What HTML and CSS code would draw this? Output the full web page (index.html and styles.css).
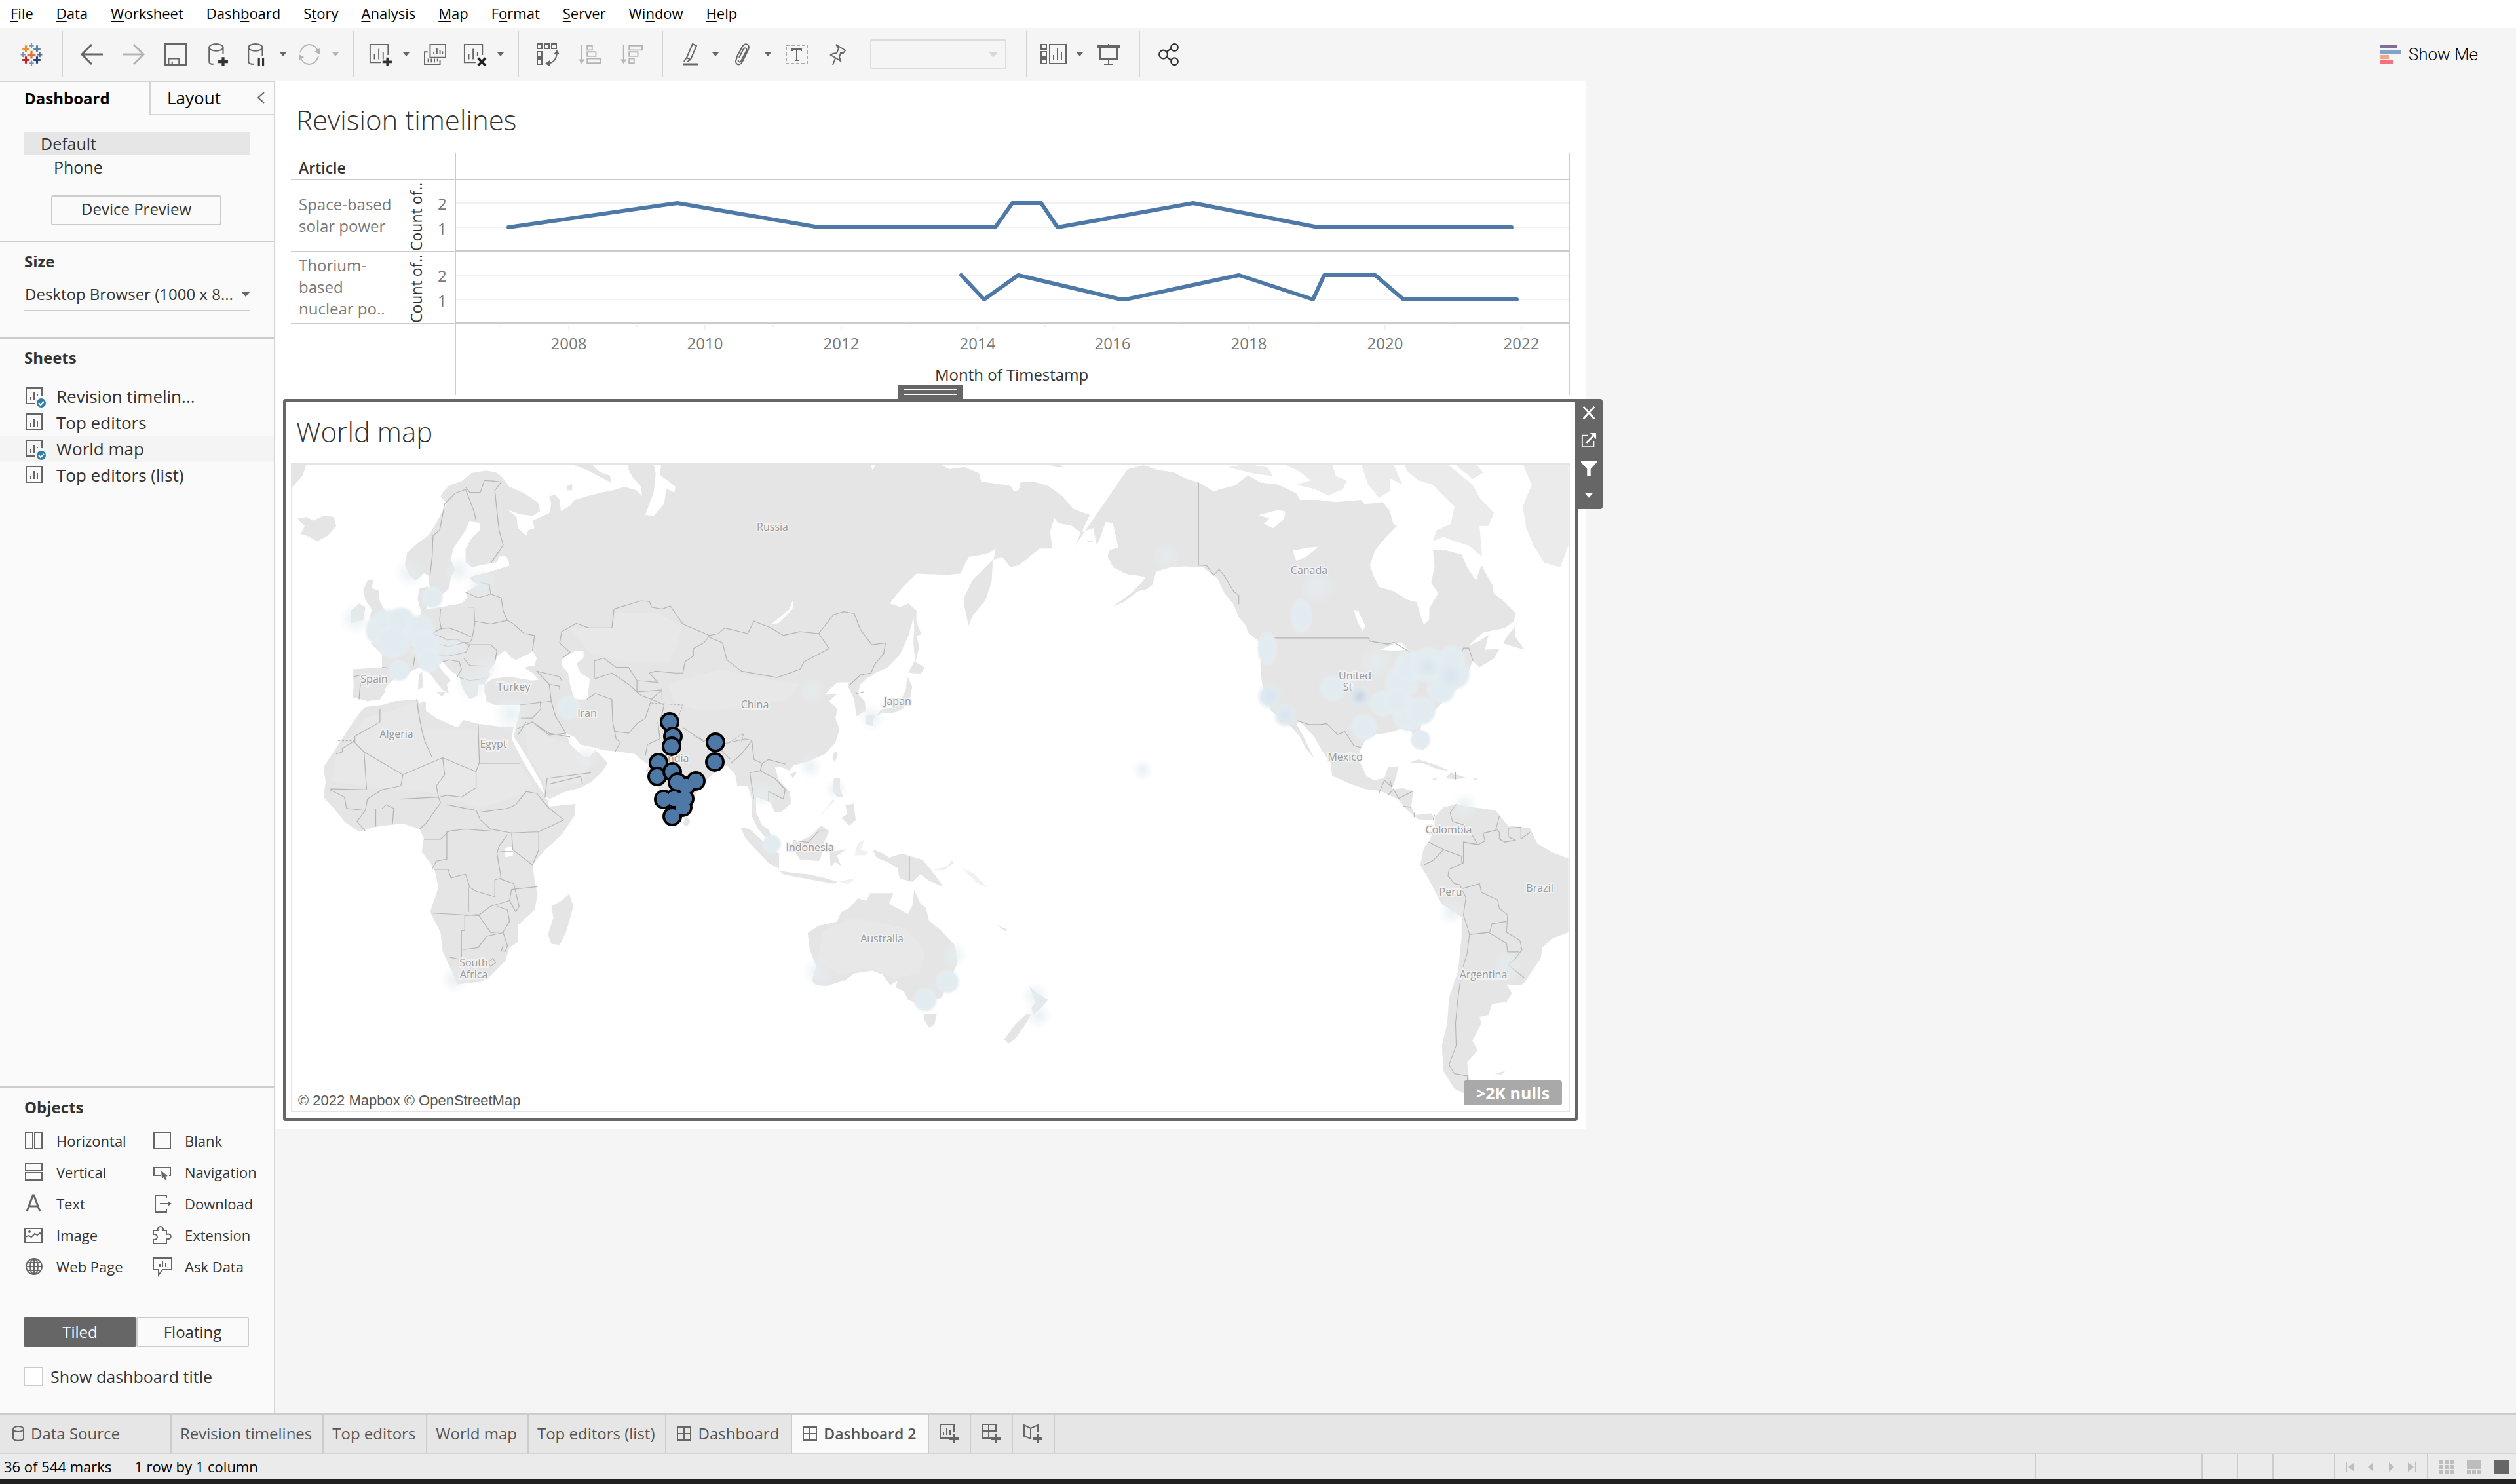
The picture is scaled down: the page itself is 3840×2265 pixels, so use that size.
FILE: index.html
```html
<!DOCTYPE html>
<html lang="en">
<head>
<meta charset="utf-8">
<title>Dashboard 2</title>
<link rel="stylesheet" href="styles.css">
</head>
<body>
<svg class="defs" aria-hidden="true">
  <defs>
    <symbol id="i-caret" viewBox="0 0 12 8"><path d="M1 1h10L6 7z" fill="currentColor"/></symbol>
    <symbol id="i-dash" viewBox="0 0 22 22"><path d="M1 1h20v20H1zM11 1v20M1 11h20"/></symbol>
    <symbol id="i-mini" viewBox="0 0 34 34"><path d="M3 4h24v24H3zM10 23v-5M15 23V11M20 23v-9"/></symbol>
    <symbol id="i-minicheck" viewBox="0 0 34 34"><path d="M16 28H3V4h24v12M10 23v-5M15 23V11M20 16v-2"/><circle cx="26" cy="27" r="7" fill="#337ea3" stroke="none"/><path d="M22 27l3 3 5-5" stroke="#fff" stroke-width="2"/></symbol>
    <radialGradient id="heat"><stop offset="0" stop-color="#e1ebf0"/><stop offset=".75" stop-color="#e3ecf0"/><stop offset="1" stop-color="#e8f0f4" stop-opacity="0"/></radialGradient>
    <radialGradient id="faint"><stop offset="0" stop-color="#e4ecf0" stop-opacity=".8"/><stop offset="1" stop-color="#e8f0f4" stop-opacity="0"/></radialGradient>
    <radialGradient id="hot"><stop offset="0" stop-color="#c9d1df"/><stop offset=".6" stop-color="#dce5ed"/><stop offset="1" stop-color="#e3ecf0" stop-opacity="0"/></radialGradient>
    <radialGradient id="warm"><stop offset="0" stop-color="#dae4ee"/><stop offset=".6" stop-color="#dfe9ef"/><stop offset="1" stop-color="#e3ecf0" stop-opacity="0"/></radialGradient>
  </defs>
</svg>

<nav class="menubar" aria-label="Main menu">
  <a href="#"><u>F</u>ile</a><a href="#"><u>D</u>ata</a><a href="#"><u>W</u>orksheet</a><a href="#">Dash<u>b</u>oard</a><a href="#">S<u>t</u>ory</a><a href="#"><u>A</u>nalysis</a><a href="#"><u>M</u>ap</a><a href="#">F<u>o</u>rmat</a><a href="#"><u>S</u>erver</a><a href="#">Wi<u>n</u>dow</a><a href="#"><u>H</u>elp</a>
</nav>

<div class="toolbar">
  <div class="group first">
    <button class="tool" aria-label="Start page"><svg viewBox="0 0 32 32" stroke-width="3">
      <path d="M16 11v11M10 16.500h12" stroke="#eb6f2d"/><path d="M8 3v10M3 8h10" stroke="#e8912d"/><path d="M24 3v10M19 8h10" stroke="#5b879b"/><path d="M8 19v10M3 24h10" stroke="#c8202f"/><path d="M24 19v10M19 24h10" stroke="#1f457e"/>
      <path d="M16 0v7M12.500 3.500h7M4 13v7M.5 16.500h7" stroke="#7199a6" stroke-width="2"/><path d="M28 13v7M24.500 16.500h7" stroke="#59658f" stroke-width="2"/><path d="M16 25v7M12.500 28.500h7" stroke="#7b8fb5" stroke-width="2"/></svg></button>
  </div>
  <div class="group">
    <button class="tool" aria-label="Undo"><svg viewBox="0 0 34 32" stroke-width="3"><path d="M2 16h32M17 1L2 16l15 15"/></svg></button>
    <button class="tool off" aria-label="Redo"><svg viewBox="0 0 34 32" stroke-width="3"><path d="M0 16h32M17 1l15 15-15 15"/></svg></button>
    <button class="tool" aria-label="Save"><svg viewBox="0 0 32 32"><path d="M1 1h30v30H1zM6 31V22h15v9M11 31v-5"/></svg></button>
    <button class="tool" aria-label="New data source"><svg viewBox="0 0 32 32"><ellipse cx="14" cy="6" rx="10" ry="5"/><path d="M4 6v20c0 3 3 4 6 4M24 6v10"/><path d="M24 20v13M17 26.500h14" stroke="#333" stroke-width="4"/></svg></button>
    <button class="tool split" aria-label="Pause updates"><svg viewBox="0 0 32 32"><ellipse cx="14" cy="6" rx="10" ry="5"/><path d="M4 6v20c0 3 3 4 8 4M24 6v12"/><path d="M19 21v12M25 21v12" stroke="#333" stroke-width="3"/></svg></button>
    <button class="caret" aria-label="Update options"><svg><use href="#i-caret"/></svg></button>
    <button class="tool split off" aria-label="Refresh"><svg viewBox="0 0 34 32"><path d="M3 13C6 5 11 1 17 1c7 0 12 5 14 12M31 19c-3 8-8 12-14 12-7 0-12-5-14-12"/><path d="M25 12l8 4V7zM9 20l-8-4v9z" fill="currentColor" stroke="none"/></svg></button>
    <button class="caret off" aria-label="Refresh options"><svg><use href="#i-caret"/></svg></button>
  </div>
  <div class="group">
    <button class="tool split" aria-label="New worksheet"><svg viewBox="0 0 36 36"><path d="M20 31H2V2h29v17M9 26v-8M16 26V9M23 26V14"/><path d="M30 23v14M22 30h15" stroke="#333" stroke-width="4"/></svg></button>
    <button class="caret" aria-label="New sheet options"><svg><use href="#i-caret"/></svg></button>
    <button class="tool" aria-label="Duplicate"><svg viewBox="0 0 36 34"><path d="M10 1h25v21H10zM16 17v-4M21 17V7M26 17v-7M30 17v-5M6 13H1v20h25V26M7 24v6M12 24v6M17 24v6M22 24v4"/></svg></button>
    <button class="tool split" aria-label="Clear sheet"><svg viewBox="0 0 36 36"><path d="M20 31H2V2h29v17M9 26v-8M16 26V9M23 20V14"/><path d="M24 24l12 12M36 24L24 36" stroke="#222" stroke-width="4"/></svg></button>
    <button class="caret" aria-label="Clear options"><svg><use href="#i-caret"/></svg></button>
  </div>
  <div class="group">
    <button class="tool" aria-label="Swap rows and columns"><svg viewBox="0 0 34 34"><path d="M1 1h7v7H1zM12 1h7v7h-7zM23 1h7v7h-7zM1 13h7v8H1zM1 24h7v8H1zM17 31c8-1 13-7 14-16"/><path d="M26 17l5-7 4 7zM20 26l-7 5 7 4z" fill="currentColor" stroke="none"/></svg></button>
    <button class="tool off" aria-label="Sort ascending"><svg viewBox="0 0 36 34"><path d="M5 2v25M14 3h8v7h-8zM14 13h14v7H14zM14 24h21v7H14z"/><path d="M0 25h10l-5 7z" fill="currentColor" stroke="none"/></svg></button>
    <button class="tool off" aria-label="Sort descending"><svg viewBox="0 0 36 34"><path d="M5 2v25M14 3h21v7H14zM14 13h14v7H14zM14 24h8v7h-8z"/><path d="M0 25h10l-5 7z" fill="currentColor" stroke="none"/></svg></button>
  </div>
  <div class="group">
    <button class="tool split" aria-label="Highlight"><svg viewBox="0 0 32 34"><path d="M21 1l6 3-9 21-6-3zM12 22l-3 4M18 25l-5 3M9 26l-1 2"/><path d="M6 32h23" stroke-width="3"/></svg></button>
    <button class="caret" aria-label="Highlight options"><svg><use href="#i-caret"/></svg></button>
    <button class="tool split" aria-label="Group members"><svg viewBox="0 0 32 34"><path d="M12 22l6-12c3-5 7-2 5 2l-8 15c-2 3-5 1-4-2M9 20L17 5c4-7 13-3 9 5L17 28c-4 8-13 4-9-4z"/></svg></button>
    <button class="caret" aria-label="Group options"><svg><use href="#i-caret"/></svg></button>
    <button class="tool" aria-label="Show mark labels"><svg viewBox="0 0 34 32"><path d="M1 2h32v28H1z" stroke="#aaa" stroke-dasharray="5 3"/><path d="M10 11V8h14v3M17 8v17M14 25h6"/></svg></button>
    <button class="tool" aria-label="Fix axes"><svg viewBox="0 0 34 34"><path d="M13 2l14 9-3 4-4 0-2 6 2 6L5 18l3-2 6-1 3-7zM12 23L8 33"/></svg></button>
    <select class="fit" aria-label="Fit" disabled><option></option></select>
  </div>
  <div class="group">
    <button class="tool split" aria-label="Show or hide cards"><svg class="cards" viewBox="0 0 40 34"><path d="M1 2h8v7H1zM1 13h8v8H1zM1 24h8v7H1zM14 2h25v29H14zM20 26v-8M26 26V8M32 26V13"/></svg></button>
    <button class="caret" aria-label="Card options"><svg><use href="#i-caret"/></svg></button>
    <button class="tool" aria-label="Presentation mode"><svg viewBox="0 0 34 32"><path d="M4 6v17h26V6M17 23v8M10 31h14M17 0v3"/><path d="M0 4h34" stroke-width="4"/></svg></button>
  </div>
  <div class="group last">
    <button class="tool" aria-label="Share"><svg class="share" viewBox="0 0 32 32"><circle cx="8" cy="16" r="6"/><circle cx="24" cy="6" r="5"/><circle cx="24" cy="26" r="5"/><path d="M13 12l6-4M13 20l6 4"/></svg></button>
  </div>
  <button class="showme"><svg viewBox="0 0 32 30"><path fill="#846c95" d="M0 0h25v6H0z"/><path fill="#81a3cb" d="M0 8h32v6H0z"/><path fill="#f4a680" d="M0 16h13v6H0z"/><path fill="#f96f80" d="M0 24h19v6H0z"/></svg>Show Me</button>
</div>

<div class="workspace">
  <aside class="side">
    <div class="sidetabs">
      <button class="sidetab on">Dashboard</button>
      <button class="sidetab">Layout<svg viewBox="0 0 12 18"><path d="M11 1L2 9l9 8"/></svg></button>
    </div>
    <section class="devices">
      <ul><li class="on">Default</li><li>Phone</li></ul>
      <button class="preview">Device Preview</button>
    </section>
    <section class="size">
      <h2><label for="size">Size</label></h2>
      <div class="sizebox"><select id="size"><option>Desktop Browser (1000 x 8...</option></select><svg viewBox="0 0 14 9"><path d="M0 0h14L7 8z" fill="currentColor" stroke="none"/></svg></div>
    </section>
    <section class="sheets">
      <h2>Sheets</h2>
      <ul>
        <li><svg><use href="#i-minicheck"/></svg>Revision timelin...</li>
        <li><svg><use href="#i-mini"/></svg>Top editors</li>
        <li class="on"><svg><use href="#i-minicheck"/></svg>World map</li>
        <li><svg><use href="#i-mini"/></svg>Top editors (list)</li>
      </ul>
    </section>
    <section class="objects">
      <h2>Objects</h2>
      <ul>
        <li><svg viewBox="0 0 30 30"><path d="M3 2h11v25H3zM17 2h11v25H17z"/></svg>Horizontal</li>
        <li><svg viewBox="0 0 30 30"><path d="M3 2h25v25H3z"/></svg>Blank</li>
        <li><svg viewBox="0 0 30 30"><path d="M3 2h25v11H3zM3 16h25v11H3z"/></svg>Vertical</li>
        <li><svg viewBox="0 0 30 30"><path d="M13 20H3V8h25v12h-2"/><path d="M14 13l10 8-4 1 3 4-3 1-2-4-3 2z" fill="currentColor" stroke="none"/></svg>Navigation</li>
        <li><svg viewBox="0 0 30 30" stroke-width="3"><path d="M5 27L14 3h2l9 24M8 19h14"/></svg>Text</li>
        <li><svg viewBox="0 0 30 30"><path d="M22 7V3H5v25h17v-4M12 15h14"/><path d="M24 11l6 4-6 4z" fill="currentColor" stroke="none"/></svg>Download</li>
        <li><svg viewBox="0 0 30 30"><path d="M2 5h26v21H2zM2 18l6-2 4 2 5-5 4 2 4-3 3 4"/><circle cx="9" cy="10" r="2" fill="currentColor" stroke="none"/></svg>Image</li>
        <li><svg viewBox="0 0 30 30"><path d="M2 8h7c-2-7 9-9 8 0h5v6c9-3 9 9 0 7v7H2v-6c8 1 8-9 0-8z"/></svg>Extension</li>
        <li><svg viewBox="0 0 30 30"><circle cx="16" cy="15" r="12"/><ellipse cx="16" cy="15" rx="6" ry="12"/><path d="M16 3v24M4 15h24M6 9h20M6 21h20"/></svg>Web Page</li>
        <li><svg viewBox="0 0 30 30"><path d="M2 2h28v18H16l-6 8v-8H2zM12 16v-5M16 16V6M21 16V9"/></svg>Ask Data</li>
      </ul>
      <div class="mode"><button class="on">Tiled</button><button>Floating</button></div>
      <label class="check"><input type="checkbox">Show dashboard title</label>
    </section>
  </aside>

  <main class="canvas">
    <div class="dashboard">
      <section class="timeline">
        <h1>Revision timelines</h1>
        <div class="chart">
          <div class="heads">
            <div class="head">Article</div>
            <div class="row"><span class="name">Space-based solar power</span><span class="axis">Count of..</span><span class="ticks"><i>2</i><i>1</i></span></div>
            <div class="row"><span class="name">Thorium-based nuclear po..</span><span class="axis">Count of..</span><span class="ticks"><i>2</i><i>1</i></span></div>
          </div>
          <svg class="plot" viewBox="696 233 1700 370" role="img" aria-label="Count of revisions by month">
            <g stroke="#f1f1f1" stroke-width="2"><path d="M686 310H2394M686 347H2394M686 420H2394M686 457H2394"/>
              <path d="M868 496v8M1076 496v8M1284 496v8M1492 496v8M1699 496v8M1906 496v8M2114 496v8M2322 496v8M764 496v3M972 496v3M1180 496v3M1388 496v3M1595 496v3M1803 496v3M2011 496v3M2218 496v3"/></g>
            <path d="M694 274H2394M2395 233V603" stroke="#ccc" stroke-width="2"/>
            <path d="M694 383H2394M694 493H2394" stroke="#ccc" stroke-width="2"/>
            <g stroke="#4e79a7" stroke-width="6" stroke-linecap="round" stroke-linejoin="round">
              <path d="M776 347L1034 310 1250 347H1519L1545 310H1589L1614 347 1821 310 2012 347H2307"/>
              <path d="M1467 420L1502 457 1554 420 1711 457H1718L1891 420 2004 457 2021 420H2099L2142 457H2315"/>
            </g>
            <g class="years"><text x="868" y="533">2008</text><text x="1076" y="533">2010</text><text x="1284" y="533">2012</text><text x="1492" y="533">2014</text><text x="1698" y="533">2016</text><text x="1906" y="533">2018</text><text x="2114" y="533">2020</text><text x="2322" y="533">2022</text></g>
            <text class="axistitle" x="1544" y="581">Month of Timestamp</text>
          </svg>
        </div>
      </section>
      <section class="worldmap">
        <button class="grip" aria-label="Move"></button>
        <div class="sidebuttons">
          <button aria-label="Remove"><svg viewBox="0 0 26 26" stroke-width="3"><path d="M4 3l18 20M22 3L4 23"/></svg></button>
          <button aria-label="Go to sheet"><svg viewBox="0 0 26 26"><path d="M12 5H2v19h19V14" stroke-width="2"/><path d="M9 17L21 5" stroke-width="3"/><path d="M15 1h10v10z" fill="#fff" stroke="none"/></svg></button>
          <button aria-label="Use as filter"><svg viewBox="0 0 26 26"><path d="M0 1h26v3L16 15v11h-6V15L0 4z" fill="#fff" stroke="none"/></svg></button>
          <button aria-label="More options"><svg viewBox="0 0 26 26"><path d="M6 9h14l-7 8z" fill="#fff" stroke="none"/></svg></button>
        </div>
        <h1>World map</h1>
        <div class="mapbox">
          <svg class="map" viewBox="444 707 1952 990" role="img" aria-label="World map of editors">
            <g class="land" transform="translate(430 700) scale(.6378 .5741)">
              <path d="M22 13H60L50 45 22 80zM38 160l22-5 15 10 25-13 25 3 5 25-20 25-25 15-25-15-15-5 10-20z"/>
              <path d="M385 90L400 72 430 60 455 38 490 32 515 38 528 50 545 75 580 92 615 118 618 140 600 152 570 148 540 135 562 155 565 185 585 205 590 190 605 185 600 165 640 145 645 120 640 100 655 95 665 110 668 140 690 125 700 110 730 100 765 90 790 85 820 75 850 85 862 100 860 75 840 50 830 30 830 13H890L895 40 890 90 870 150 890 152 915 120 920 80 940 90 942 75 920 55 905 45 908 13H1405L1415 32 1422 13H1568V303L1520 303 1505 315 1470 360 1455 385 1480 395 1500 385 1520 405 1510 430 1500 470 1480 520 1450 555 1420 570 1400 585 1385 600 1378 625 1395 645 1398 670 1375 685 1370 640 1355 605 1358 595 1330 595 1310 615 1300 628 1330 625 1310 645 1330 665 1325 690 1335 720 1325 755 1300 785 1260 805 1225 815 1215 830 1195 820 1180 820 1190 855 1215 885 1220 915 1195 940 1180 940 1170 915 1150 905 1135 900 1135 940 1150 975 1165 985 1178 1022 1160 1010 1140 985 1125 950 1125 905 1115 870 1090 870 1085 840 1065 815 1050 825 1030 840 1000 870 985 905 975 945 955 960 930 960 925 940 905 880 890 850 870 830 880 815 860 800 845 785 800 778 770 775 755 770 735 765 715 760 700 740 680 730 690 760 705 780 715 790 735 795 750 775 760 785 780 810 765 835 740 860 715 875 680 885 640 905 630 895 620 860 590 800 565 755 555 740 560 715 567 680 572 655 545 655 510 655 490 645 485 620 485 600 505 585 545 580 600 590 615 588 600 570 580 555 605 550 610 530 600 512 590 520 560 535 550 530 535 510 515 525 510 545 495 565 500 575 490 590 485 600 470 600 468 630 450 640 440 625 430 600 425 580 400 560 385 540 375 550 385 565 405 590 395 600 400 625 385 615 370 595 350 565 330 555 310 565 300 575 280 580 265 590 250 605 245 625 235 640 205 645 190 640 170 635 172 600 170 560 240 555 240 520 212 490 240 485 260 470 290 450 300 440 320 430 335 410 330 395 325 370 330 345 350 340 355 370 350 390 345 400 380 395 430 385 445 370 440 355 455 345 470 335 455 325 450 315 465 310 500 300 545 285 540 265 520 260 515 275 470 285 455 290 440 275 440 240 455 210 475 190 475 172 450 165 440 190 425 215 410 240 405 270 415 295 405 315 400 345 385 360 375 370 355 350 350 310 340 305 320 325 305 310 295 280 300 250 325 225 350 205 360 190 380 150 395 120 380 100z"/>
              <path d="M200 660L240 655 270 645 325 640 330 650 345 645 345 670 370 690 420 715 435 695 470 705 520 712 555 712 550 745 575 800 605 855 635 905 640 925 703 918 700 950 670 1000 630 1040 600 1080 605 1120 612 1160 605 1200 565 1240 565 1285 545 1300 535 1335 500 1375 480 1390 420 1398 410 1370 385 1310 380 1260 355 1205 375 1140 365 1090 335 1045 340 1010 330 985 290 970 250 975 220 980 185 992 150 965 125 930 100 900 105 860 100 820 130 770 165 710 190 670zM688 1157L698 1190 680 1260 665 1293 645 1290 637 1265 650 1220 645 1190 670 1175z"/>
              <path d="M205 325L220 320 215 345 232 350 235 380 245 400 262 440 255 460 225 465 205 460 225 440 210 430 215 400 200 375 195 350zM165 405L185 385 200 395 195 430 165 438zM328 572l8-4 2 40-12 5zM370 620l22 0-8 14zM690 13L740 13 760 35 785 45 790 65 755 45 730 30zM683 72l12-4v16h-12zM968 950l10 15-8 12-10-5z"/>
              <path d="M1098 980L1120 985 1155 1020 1190 1050 1190 1090 1165 1075 1135 1040 1110 1010zM1190 1095L1215 1100 1260 1105 1300 1115 1330 1125 1320 1130 1270 1120 1200 1105zM1222 1015L1235 1020 1270 1000 1290 975 1310 990 1298 1020 1290 1060 1285 1070 1240 1065 1225 1040z"/>
              <path class="high" d="M200 690L320 650 335 720 470 720 475 810 570 812 600 870 560 900 470 930 380 890 280 880 120 860 130 790zM580 700L640 740 690 760 740 810 720 860 640 880 590 790zM925 600L1050 560 1180 590 1240 600 1210 640 1120 660 1000 670 940 650zM690 450L790 450 800 410 900 410 960 450 930 540 830 540 740 520z"/>
            </g>
            <g class="land" transform="translate(1000 700) scale(.6378)">
              <path d="M300 13H515L520 27 530 13H680L705 25 740 20 775 35 780 55 850 65 858 78 870 75 875 55 905 55 940 65 975 90 1000 120 1040 135 1030 155 1020 178 995 160 965 155 955 142 945 175 950 215 920 215 870 255 850 260 830 235 808 242 805 295 790 340 760 375 750 400 740 355 740 330 760 290 785 265 810 240 815 215 800 225 780 230 750 235 730 275 700 278 625 275 590 310 560 348H300z"/>
              <path d="M940 18l30-5 5 8zM1030 195l20 2-10 4zM615 355L625 365 625 390 637 420 625 425 632 450 622 490 618 440 620 400zM620 485L645 500 635 515 605 512 615 495zM603 520L615 545 610 575 590 600 565 610 545 608 530 615 540 600 575 595 590 575 600 550zM505 615L525 615 520 640 505 635zM430 700l7 5-7 23-6-13zM322 755l18-7-10 17z"/>
              <path d="M428 765L442 765 442 790 450 810 435 810 425 795zM455 830L475 825 480 865 465 878 445 860 460 850zM418 935L430 940 458 935 435 950 445 975 430 965 420 978 418 955z"/>
              <path d="M520 935L545 945 560 955 590 945 640 960 665 990 690 1025 655 1010 635 995 615 1013 585 1005 580 980 555 965 530 955z"/>
              <path class="pale" d="M665 985L700 975 710 960 715 968 690 985zM735 980l30 15 30 32-25-12zM485 920l15-8-8 25 20 4-10 8-25 0zM425 815l5 3-35 37zM440 1012l40-8-18 14z"/>
              <path d="M365 1135L390 1118 435 1108 445 1085 465 1075 485 1052 505 1058 515 1040 570 1040 560 1065 605 1090 615 1070 620 1032 635 1065 648 1075 655 1105 685 1130 718 1165 722 1210 700 1260 685 1290 655 1300 640 1310 605 1295 595 1275 575 1265 580 1250 562 1260 545 1235 520 1225 475 1232 455 1248 410 1262 385 1260 375 1250 385 1215 370 1175zM642 1328L674 1328 668 1355 655 1362 645 1345zM895 1262L915 1280 940 1295 920 1318 905 1330 900 1315 910 1300zM890 1328L900 1330 885 1355 860 1390 845 1400 835 1390 860 1355zM815 1115l30 13-8 2z"/>
              <path class="high" d="M400 1130L470 1100 540 1110 600 1125 645 1180 635 1230 570 1245 520 1220 440 1235 390 1200z"/>
            </g>
            <g class="land" transform="translate(1600 700) scale(.5485 .6633)">
              <path d="M220 25L265 15 300 25 350 32 380 45 418 55 460 75 490 68 520 62 555 38 590 55 640 60 690 80 700 95 750 95 800 100 870 95 880 105 930 100 950 120 960 150 970 155 940 180 910 210 895 245 905 270 920 295 960 305 1000 325 1025 330 1035 360 1045 382 1060 370 1060 345 1085 310 1065 285 1075 250 1070 210 1100 210 1150 220 1165 250 1190 280 1205 245 1235 290 1240 310 1270 330 1300 355 1295 375 1270 390 1210 400 1170 430 1200 420 1225 405 1215 440 1255 438 1240 460 1200 480 1180 465 1170 490 1150 520 1110 550 1080 575 1060 590 1040 605 1035 625 1055 660 1040 672 1020 650 1010 628 980 622 950 630 910 635 880 650 868 670 865 695 885 730 905 740 935 735 945 710 975 708 965 740 955 762 985 758 1015 765 1010 800 1020 820 1045 818 1065 816 1075 828 1060 832 1030 830 1000 810 975 785 925 765 880 760 840 748 790 730 785 700 760 670 740 640 700 605 690 610 710 640 725 665 740 690 715 665 700 640 680 620 650 600 620 580 595 520 590 480 592 425 555 400 550 385 530 365 515 335 490 310 470 275 430 250 380 248 340 250 300 260 290 290 275 300 250 305 210 330 180 340 230 310 260 285 270 272 215 265 180 250 165 225 170 210 195 205 180 150 160 145 145 180 135 200 125 160 90 170 75 200 70 205 45z"/>
              <path class="mid" d="M655 12H790L800 40 830 50 820 70 780 85 740 70 690 60 730 50 700 30zM990 12H1110L1180 60 1200 90 1240 125 1225 155 1200 155 1207 225 1170 200 1130 190 1100 180 1070 190 1080 165 1120 150 1130 110 1100 85 1070 60 1030 50 1000 30zM870 12H960L985 60 950 45 950 75 920 90 890 60zM500 20l50-8 60 8 15 20-50-5zM1130 12h60l20 20-30 15zM1320 12H1447V200L1425 250 1380 240 1350 200 1330 160 1320 110 1345 60z"/>
              <path d="M1005 700L1030 692 1080 705 1115 718 1085 715 1040 700zM1105 735L1120 722 1165 735 1130 738zM1183 736h10v3h-10zM1300 385L1300 410 1325 440 1265 425 1280 405zM1070 735l15 3-15 1zM1242 1415l30-6-12 8z"/>
              <path d="M1075 825L1100 802 1135 795 1160 800 1210 805 1245 810 1280 845 1340 850 1360 885 1400 905 1447 920V1090L1400 1105 1375 1125 1370 1150 1325 1205 1315 1212 1275 1210 1290 1230 1275 1250 1235 1255 1225 1280 1200 1285 1205 1300 1180 1340 1195 1360 1165 1390 1170 1425 1200 1470 1170 1465 1130 1450 1100 1410 1095 1350 1110 1300 1115 1240 1140 1180 1150 1100 1150 1055 1095 1025 1060 970 1035 935 1045 895 1060 880 1075 850z"/>
              <path class="water" d="M585 130L640 118 660 122 655 140 625 160 600 150 615 138zM680 212L720 205 750 203 720 225 690 235zM850 348L862 350 882 385 875 397 860 375zM925 440L965 425 985 425 1000 440 960 442zM1080 95l25-5 0 20-20-2z"/>
            </g>
            <g class="water" transform="translate(430 700) scale(.6378 .5741)">
              <path d="M672 530L700 512 722 512 722 530 705 545 715 570 737 585 732 640 700 640 690 600 685 570 670 550zM1225 370L1222 400 1190 437 1172 440 1215 400zM520 262l15-4 10 20-10 12zM535 1035l18-5 0 25-18 5z"/>
            </g>
            <g class="borders" transform="translate(430 700) scale(.6378 .5741)">
              <path d="M355 310L360 260 362 205 378 190 390 120 415 92 440 82 460 140 465 165M440 75L450 90 475 90 485 58 510 60 525 62 510 85 515 140 520 190 530 230 500 278M380 400L378 430 382 455M445 395L460 395 462 440 455 480M440 355L470 370 500 360 497 335 470 328M500 360L525 370 530 405 540 430 500 440 460 432M540 430L555 440 580 465 605 470 600 510M455 480L450 490 430 488 420 480 395 482 385 475 360 465 380 452 400 450 425 460 455 475M365 490L400 500 435 490 450 495 440 515 400 525 375 525M450 495L500 495 515 510 510 540M435 530L450 550 490 552M385 540L400 535 425 540 430 560 420 580 450 590 485 585M172 580L190 575 185 640M240 555L280 560M315 550L320 515 310 500M570 655L645 645 640 600 610 565 665 580 670 590M640 600L665 605 665 615M572 690L600 690 620 665 618 645M560 720L600 700 640 735 680 730M645 645L655 685 680 730M565 735L585 700M600 700L640 730 690 740M748 585V538L770 530 800 555 830 555 850 590 900 595 880 570 895 565 940 570 960 570 965 540 985 525 985 505 1010 490 1023 472M672 530L690 515 665 490 670 460 705 438 735 450 790 450 795 400 860 378 880 380 885 395 910 400 930 392 960 440 1023 470 1045 465 1060 450 1115 465 1130 432 1170 450 1200 470 1240 460 1285 465 1310 505 1250 540 1240 560 1185 582 1100 565 1065 535 1055 490 1023 475M1285 465L1320 415 1345 407 1370 412 1385 455 1412 495 1445 490 1440 520 1420 545 1410 570 1385 575 1358 603M1375 625L1392 620M730 640L750 625 790 640 792 700 800 745 810 755 798 778M795 725L830 730 850 705 870 690 885 640 860 630 830 600 790 570 750 585M850 590L850 620 910 615 885 640 915 655 905 700M910 610L910 640M870 790L875 760 905 745 900 700M960 715L1000 745 1045 760 1070 755 1110 745 1125 750 1100 785 1075 810M1048 765L1055 780 1075 800M1000 740L1005 750 1045 765M1125 750L1130 800 1150 810 1145 830 1120 835 1125 870 1130 905M1150 810L1165 800 1205 812M1145 830L1180 850 1205 880 1200 905 1165 885 1165 910M1225 1015L1260 1020 1285 990 1300 990M1502 1058V1123M470 710L473 810H570M472 810L465 832 385 795 290 840 197 780 203 880 115 878M197 780L175 755V738L235 700V665M175 750L145 770 145 780 130 785M323 640L328 680 335 720 342 750 360 795M465 832L465 875 430 900 395 895 375 900 370 870 390 840 385 795M290 840L285 870 240 880 205 905 200 935 155 930 150 900 115 880M285 905L375 900 380 915 345 970 330 985M265 970L268 930 250 920 240 930M225 978L225 930M200 990L180 965 200 935M395 920L440 930 465 935 475 960 500 985 550 995 615 992 675 960 640 930 610 890 585 885 560 920 540 930 475 940M615 992L615 1040 600 1080M550 995L553 1040 600 1080M523 1045H553M340 1012H380L400 990 440 985 500 990M360 1090L370 1070 395 1065 395 990M365 1092H398L405 1115 420 1110 440 1105 450 1140 465 1150 510 1165 510 1120 525 1115 515 1050 520 1030 540 1000M447 1140V1205M355 1208L470 1215 500 1190 545 1175 550 1145 612 1138M545 1175L560 1205 568 1190 555 1130 525 1118M430 1330V1255H438V1215L470 1212 500 1260 530 1258 545 1230 540 1200 515 1190M435 1305L470 1300 490 1270 530 1260 540 1295 535 1310 525 1308 530 1295M493 1340L505 1328 512 1340 500 1350zM400 1325L430 1332M630 900L635 850 740 835M640 865L715 845 720 865"/>
              <path d="M135 750H175M885 650L960 655 950 685 905 675M1070 755L1105 730 1100 755" stroke-dasharray="5 4"/>
            </g>
            <g class="borders" transform="translate(1600 700) scale(.5485 .6633)">
              <path d="M418 55V245L440 246 460 268 475 255 490 270 515 305 530 315 530 335M628 413H890L895 420 945 427 962 423 1000 442 1022 460M1145 460L1155 436 1170 436 1182 466M692 603L725 612H755L775 610 805 635 825 628 850 660 870 665M920 770L935 740 955 755 950 735M945 775L960 760 975 782 1015 765M988 800L1010 802M1018 815V825M1075 820L1070 832M1133 722V738M1135 795L1118 815 1125 835 1165 845 1175 860 1195 888 1215 880 1210 862 1245 855 1255 822M1245 850L1255 860 1255 875 1270 882 1300 878 1280 870 1280 850 1315 848 1315 875 1340 860M1195 888L1155 882 1155 930 1115 945 1112 960 1130 978 1145 980 1150 990 1200 978 1205 998 1250 1015 1255 1035 1278 1050 1275 1090 1312 1108 1318 1130 1300 1150 1280 1165 1325 1195M1058 882L1100 900 1150 915 1150 930M1100 900L1070 925 1045 935M1150 990L1162 1010 1155 1050 1165 1075 1172 1095 1225 1090 1275 1115 1278 1135 1310 1135M1228 1090L1235 1070 1275 1065M1280 1165L1275 1200M1172 1095L1165 1140 1150 1180 1140 1240 1133 1300 1135 1350 1115 1395 1130 1415 1166 1420V1458L1190 1460"/>
            </g>
            <g class="heat" fill="url(#heat)">
              <ellipse cx="574" cy="962" rx="18" ry="24"/><circle cx="592" cy="955" r="28"/><circle cx="612" cy="950" r="26"/><circle cx="600" cy="980" r="28"/><circle cx="640" cy="960" r="24"/><circle cx="650" cy="985" r="26"/><circle cx="655" cy="1008" r="20"/><circle cx="660" cy="912" r="18"/><circle cx="609" cy="1024" r="18"/><circle cx="868" cy="1080" r="20"/><circle cx="1178" cy="1288" r="16"/><circle cx="1412" cy="1526" r="20"/><circle cx="1446" cy="1498" r="20"/>
              <ellipse cx="1934" cy="990" rx="17" ry="28"/><ellipse cx="1986" cy="940" rx="18" ry="28"/><circle cx="2034" cy="1050" r="22"/><circle cx="2082" cy="1110" r="22"/><circle cx="2110" cy="1074" r="22"/><circle cx="2140" cy="1040" r="28"/><circle cx="2152" cy="1016" r="26"/><circle cx="2180" cy="1015" r="30"/><circle cx="2205" cy="1025" r="30"/><circle cx="2222" cy="1030" r="24"/><circle cx="2200" cy="1052" r="24"/><circle cx="2150" cy="1090" r="28"/><circle cx="2170" cy="1085" r="24"/><circle cx="2216" cy="1005" r="22"/><circle cx="2132" cy="1070" r="22"/><circle cx="2168" cy="1129" r="17"/>
            </g>
            <g class="heat" fill="url(#faint)">
              <circle cx="733" cy="890" r="26"/><circle cx="690" cy="988" r="24"/><circle cx="720" cy="1045" r="28"/><circle cx="742" cy="1020" r="22"/><circle cx="542" cy="945" r="26"/><circle cx="700" cy="870" r="24"/><circle cx="780" cy="1090" r="30"/><circle cx="625" cy="875" r="24"/><circle cx="693" cy="1495" r="22"/><circle cx="1330" cy="1095" r="22"/><circle cx="1248" cy="1485" r="24"/><circle cx="1456" cy="1458" r="22"/><circle cx="1580" cy="1520" r="22"/><circle cx="1585" cy="1550" r="22"/><circle cx="1744" cy="1175" r="18"/><circle cx="1780" cy="850" r="22"/><circle cx="2300" cy="1475" r="24"/><circle cx="2215" cy="1392" r="22"/><circle cx="2235" cy="1230" r="22"/><circle cx="1237" cy="1170" r="20"/><circle cx="1162" cy="1212" r="22"/><circle cx="1276" cy="1205" r="18"/><circle cx="1240" cy="1055" r="20"/><circle cx="2010" cy="895" r="28"/><circle cx="2100" cy="1010" r="26"/><circle cx="895" cy="1155" r="20"/>
            </g>
            <g class="heat" fill="url(#warm)"><circle cx="1938" cy="1063" r="21"/><circle cx="1962" cy="1092" r="20"/><circle cx="2180" cy="1018" r="18"/><circle cx="2214" cy="1032" r="22"/></g>
            <g class="places">
              <text x="1179" y="810">Russia</text><text x="1152" y="1081">China</text><text x="1370" y="1076">Japan</text><text x="1236" y="1299">Indonesia</text><text x="1346" y="1438">Australia</text><text x="571" y="1042">Spain</text><text x="784" y="1054">Turkey</text><text x="896" y="1094">Iran</text><text x="605" y="1126">Algeria</text><text x="753" y="1141">Egypt</text><text x="723" y="1475">South</text><text x="723" y="1493">Africa</text><text x="1033" y="1163">India</text><text x="1998" y="876">Canada</text><text x="2068" y="1037">United</text><text x="2057" y="1054">St</text><text x="2053" y="1161">Mexico</text><text x="2211" y="1272">Colombia</text><text x="2214" y="1367">Peru</text><text x="2350" y="1361">Brazil</text><text x="2264" y="1493">Argentina</text>
            </g>
            <circle class="heat" cx="2075" cy="1063" r="19" fill="url(#hot)"/>
            <g class="marks">
              <g stroke="#000" stroke-width="4"><circle cx="1022" cy="1102" r="13"/><circle cx="1027" cy="1124" r="13"/><circle cx="1025" cy="1139" r="13"/><circle cx="1092" cy="1133" r="13"/><circle cx="1091" cy="1163" r="13"/><circle cx="1005" cy="1164" r="13"/><circle cx="1003" cy="1185" r="13"/><circle cx="1026" cy="1178" r="13"/><circle cx="1034" cy="1194" r="13"/><circle cx="1062" cy="1192" r="13"/><circle cx="1047" cy="1200" r="13"/><circle cx="1013" cy="1220" r="13"/><circle cx="1029" cy="1219" r="13"/><circle cx="1045" cy="1219" r="13"/><circle cx="1042" cy="1232" r="13"/><circle cx="1026" cy="1246" r="13"/></g>
              <g><circle cx="1034" cy="1194" r="11"/><circle cx="1062" cy="1192" r="11"/><circle cx="1047" cy="1200" r="11"/><circle cx="1013" cy="1220" r="11"/><circle cx="1029" cy="1219" r="11"/><circle cx="1045" cy="1219" r="11"/><circle cx="1042" cy="1232" r="11"/></g>
            </g>
            <path d="M445 708H2395V1696H445z" fill="none" stroke="#e4e4e4"/>
          </svg>
          <small class="credit">© 2022 Mapbox © OpenStreetMap</small>
          <button class="nulls">&gt;2K nulls</button>
        </div>
      </section>
    </div>
  </main>
</div>

<nav class="tabs" aria-label="Sheets">
  <button class="tab source"><svg viewBox="0 0 18 24"><ellipse cx="9" cy="5" rx="8" ry="4"/><path d="M1 5v14c0 5 16 5 16 0V5"/></svg>Data Source</button>
  <button class="tab">Revision timelines</button><button class="tab">Top editors</button><button class="tab">World map</button><button class="tab">Top editors (list)</button>
  <button class="tab board"><svg class="grid"><use href="#i-dash"/></svg>Dashboard</button>
  <button class="tab board on"><svg class="grid"><use href="#i-dash"/></svg>Dashboard 2</button>
  <button class="tab new" aria-label="New worksheet"><svg viewBox="0 0 30 30"><path d="M14 22H1V1h21v12M6 17v-4M11 17V7M16 17v-7"/><path d="M22 16v14M15 23h14" stroke-width="4"/></svg></button>
  <button class="tab new" aria-label="New dashboard"><svg viewBox="0 0 30 30"><path d="M14 22H1V1h21v12M11 1v21M1 11h21"/><path d="M22 16v14M15 23h14" stroke-width="4"/></svg></button>
  <button class="tab new" aria-label="New story"><svg viewBox="0 0 30 30"><path d="M12 23L1 19V2l10 5 11-5v11M11 7v16"/><path d="M22 16v14M15 23h14" stroke-width="4"/></svg></button>
</nav>

<footer class="status">
  <span>36 of 544 marks</span><span>1 row by 1 column</span>
  <div class="cells"><i class="wide"></i><i></i><i></i><i class="mid"></i>
    <div class="pager"><button aria-label="First"><svg viewBox="0 0 14 14"><path d="M0 0h2v14H0zM13 0v14L4 7z"/></svg></button><button aria-label="Previous"><svg viewBox="0 0 14 14"><path d="M11 0v14L3 7z"/></svg></button><button aria-label="Next"><svg viewBox="0 0 14 14"><path d="M3 0v14l8-7z"/></svg></button><button aria-label="Last"><svg viewBox="0 0 14 14"><path d="M1 0v14l9-7zM12 0h2v14h-2z"/></svg></button></div>
    <div class="views"><button aria-label="Grid"><svg viewBox="0 0 22 22"><path d="M0 0h6v6H0zM8 0h6v6H8zM16 0h6v6h-6zM0 8h6v6H0zM8 8h6v6H8zM16 8h6v6h-6zM0 16h6v6H0zM8 16h6v6H8zM16 16h6v6h-6z"/></svg></button><button aria-label="Filmstrip"><svg viewBox="0 0 22 22"><path d="M0 0h22v14H0zM0 16h6v6H0zM8 16h6v6H8zM16 16h6v6h-6z"/></svg></button><button class="on" aria-label="Single"><svg viewBox="0 0 22 22"><path d="M0 0h22v22H0z"/></svg></button></div>
  </div>
</footer>
</body>
</html>
```
FILE: styles.css
```css
* { box-sizing: border-box; }
body { margin: 0; min-height: 100vh; display: flex; flex-direction: column; background: #f5f5f5; color: #333; font: 24px/36px "Open Sans", "Noto Sans", sans-serif; border-bottom: 7px solid #212121; }
button, select, input { font: inherit; color: inherit; margin: 0; }
button { background: none; border: 0; padding: 0; }
ul { list-style: none; margin: 0; padding: 0; }
h1, h2 { margin: 0; }
svg { fill: none; stroke: currentColor; stroke-width: 2; flex: none; overflow: visible; }
svg[stroke-width="3"] { stroke-width: 3; }
.defs { position: absolute; width: 0; height: 0; }

.menubar { display: flex; gap: 35px; height: 42px; padding: 2px 16px; background: #fff; font-size: 22px; }
.menubar a { color: #000; text-decoration: none; }
.menubar u { text-underline-offset: 3px; text-decoration-thickness: 2px; }

.toolbar { display: flex; align-items: center; height: 81px; border-top: 1px solid #eee; color: #666; }
.group { display: flex; align-items: center; height: 70px; padding: 0 14px 0 12px; border-right: 2px solid #d4d4d4; }
.group.first { padding-left: 16px; }
.group.last { border: 0; }
.tool { width: 64px; height: 64px; display: grid; place-items: center; }
.tool svg { width: 34px; height: 34px; }
.tool .cards { width: 40px; }
.tool .share { color: #333; }
.tool.split { width: 56px; }
.off { color: #b4b4b4; }
.caret { width: 24px; height: 64px; display: grid; place-items: center; }
.caret svg { width: 12px; height: 8px; stroke: none; }
.fit { appearance: none; width: 208px; height: 46px; margin: 0 16px; border: 2px solid #d4d4d4; border-radius: 3px; background: linear-gradient(to bottom left, #ccc 50%, transparent 50%) right 18px center / 7px 9px no-repeat, linear-gradient(to bottom right, #ccc 50%, transparent 50%) right 11px center / 7px 9px no-repeat; }
.showme { display: flex; align-items: center; gap: 11px; margin-left: auto; padding-right: 58px; color: #000; font: 300 26px/36px Roboto, sans-serif; }
.showme svg { width: 32px; height: 30px; stroke: none; }

.workspace { flex: 1; display: flex; min-height: 0; }
.side { flex: 0 0 420px; display: flex; flex-direction: column; border-top: 2px solid #d4d4d4; border-right: 2px solid #d4d4d4; background: #fafafa; }
.side h2 { padding-left: 37px; color: #333; font-size: 24px; font-weight: 700; }
.sidetabs { display: flex; height: 51px; color: #000; }
.sidetab { flex: 1; display: flex; align-items: center; justify-content: space-between; padding: 0 14px 2px 25px; border-left: 2px solid #d4d4d4; border-bottom: 2px solid #d4d4d4; font-size: 26px; }
.sidetab.on { flex: 0 0 228px; padding-left: 37px; border: 0; font-size: 24px; font-weight: 700; }
.sidetab svg { width: 12px; height: 18px; color: #666; }
.devices { padding: 25px 36px 24px; border-bottom: 2px solid #ccc; font-size: 25px; }
.devices li { padding-left: 46px; }
.devices .on { padding-left: 26px; background: #e6e6e6; }
.preview { display: block; width: 260px; height: 46px; margin: 25px 0 0 42px; padding-bottom: 4px; border: 2px solid #ccc; border-radius: 3px; font-size: 24px; }
.size { height: 147px; padding-top: 11px; border-bottom: 2px solid #ccc; }
.sizebox { display: flex; align-items: center; margin: 14px 36px 0; padding-bottom: 6px; border-bottom: 2px solid #ccc; color: #666; }
.sizebox select { flex: 1; min-width: 0; appearance: none; border: 0; padding: 0 0 0 2px; background: none; color: #333; }
.sizebox svg { width: 14px; height: 9px; }
.sheets { flex: 1; padding-top: 11px; }
.sheets ul { padding-top: 21px; font-size: 26px; }
.sheets li { display: flex; align-items: center; gap: 15px; height: 40px; padding: 0 0 1px 37px; }
.sheets .on { background: #f4f4f4; }
.sheets svg { width: 34px; height: 34px; color: #666; }
.objects { padding: 12px 0 38px; border-top: 2px solid #ccc; }
.objects ul { display: grid; grid-template-columns: 196px 1fr; padding: 9px 0 0 36px; font-size: 22px; }
.objects li { display: flex; align-items: center; gap: 20px; height: 48px; }
.objects li svg { width: 30px; height: 30px; color: #666; }
.mode { display: grid; grid-template-columns: 1fr 1fr; height: 46px; margin: 53px 38px 0 36px; }
.mode button { border: 2px solid #ccc; border-radius: 2px; }
.mode .on { border-color: #666; background: #666; color: #fff; }
.check { display: flex; align-items: center; gap: 11px; margin: 27px 0 0 36px; font-size: 25px; }
.check input { appearance: none; width: 30px; height: 30px; border: 2px solid #ccc; border-radius: 2px; background: #fff; }

.canvas { flex: 1; min-width: 0; }
.dashboard { max-width: 2000px; padding: 0 12px 12px; background: #fff; }
.dashboard h1 { padding: 0 8px; font-size: 42px; line-height: 48px; font-weight: 300; }
.timeline { padding: 36px 12px 6px; }
.timeline h1 { margin-bottom: 26px; }
.chart { display: flex; }
.heads { flex: 0 0 252px; border-right: 2px solid #ccc; }
.head { height: 42px; padding: 5px 12px 0; border-bottom: 2px solid #ccc; font-weight: 600; font-size: 23px; }
.row { display: flex; height: 110px; border-bottom: 2px solid #ccc; line-height: 33px; color: #787878; }
.row .name { flex: 0 0 173px; align-self: center; padding: 0 14px 3px 12px; }
.axis { writing-mode: vertical-rl; transform: rotate(180deg); width: 40px; white-space: nowrap; color: #333; font-size: 23px; line-height: 36px; }
.ticks { flex: 1; padding: 19px 0 0 11px; }
.ticks i { display: block; height: 38px; font-style: normal; }
.plot { flex: 1; min-width: 0; height: auto; overflow: hidden; }
.plot text { stroke: none; text-anchor: middle; fill: #787878; font-size: 24px; }
.plot .axistitle { fill: #333; }

.worldmap { position: relative; padding: 22px 8px 10px; border: 4px solid #666; border-radius: 4px; }
.worldmap h1 { margin-bottom: 24px; }
.grip { position: absolute; left: 934px; top: -26px; width: 100px; height: 24px; border: solid #666; border-width: 6px 9px 8px; border-radius: 4px 4px 0 0; background: linear-gradient(#fff 2px, #666 2px 8px, #fff 8px); }
.sidebuttons { position: absolute; right: -42px; top: -4px; width: 42px; border-radius: 0 4px 4px 0; background: #666; color: #fff; }
.sidebuttons button { display: grid; place-items: center; width: 42px; height: 42px; }
.sidebuttons svg { width: 24px; height: 24px; }
.mapbox { position: relative; }
.map { display: block; width: 100%; height: auto; overflow: hidden; }
.land { fill: #e5e5e5; stroke: none; }
.land .pale { fill: #f0f0f0; }
.land .mid { fill: #ebebeb; }
.land .high { fill: #e8e8e8; }
.water, .land .water { fill: #fff; stroke: none; }
.heat { stroke: none; }
.borders { fill: none; stroke: #b4b4b4; stroke-width: 2px; stroke-linejoin: round; }
.places text { fill: #999; stroke: #f1f1f1; stroke-width: 4px; paint-order: stroke; text-anchor: middle; font-size: 16px; }
.marks { fill: #4e79a7; stroke: none; }
.credit { position: absolute; left: 11px; bottom: 3px; color: #555; font: 22px/28px "Liberation Sans", Arial, sans-serif; }
.nulls { position: absolute; right: 12px; bottom: 10px; width: 150px; height: 38px; border-radius: 4px; background: #a9a9a9; color: #fff; font-size: 25px; font-weight: 700; }

.tabs { display: flex; height: 62px; border-top: 2px solid #ccc; border-bottom: 2px solid #d4d4d4; background: #e6e6e6; color: #555; }
.tab { display: flex; align-items: center; gap: 10px; padding: 0 16px 0 13px; border-right: 2px solid #ccc; white-space: nowrap; }
.tab.board { padding: 0 18px 0 16px; }
.tab.source { width: 262px; padding-left: 19px; }
.tab.source svg { width: 18px; height: 24px; }
.tab svg { color: #666; }
.tab .grid { width: 22px; height: 22px; }
.tab.on { background: #fafafa; font-size: 23px; font-weight: 600; }
.tab.new { width: 64px; padding: 0; justify-content: center; }
.tab.new svg { width: 30px; height: 30px; }

.status { display: flex; height: 39px; padding-left: 6px; gap: 35px; background: #ebebeb; color: #000; font-size: 22px; line-height: 38px; }
.cells { display: flex; margin-left: auto; }
.cells > * { width: 54px; border-left: 2px solid #ccc; }
.cells .wide { width: 254px; }
.cells .mid { width: 94px; }
.cells .pager { display: flex; justify-content: space-between; align-items: center; width: 142px; padding: 0 16px; }
.cells .views { display: flex; gap: 20px; align-items: center; width: 136px; padding-left: 17px; }
.cells svg { display: block; width: 22px; height: 22px; fill: #bdbdbd; stroke: none; }
.cells .pager svg { width: 14px; height: 14px; }
.cells .on svg { fill: #666; }
```
